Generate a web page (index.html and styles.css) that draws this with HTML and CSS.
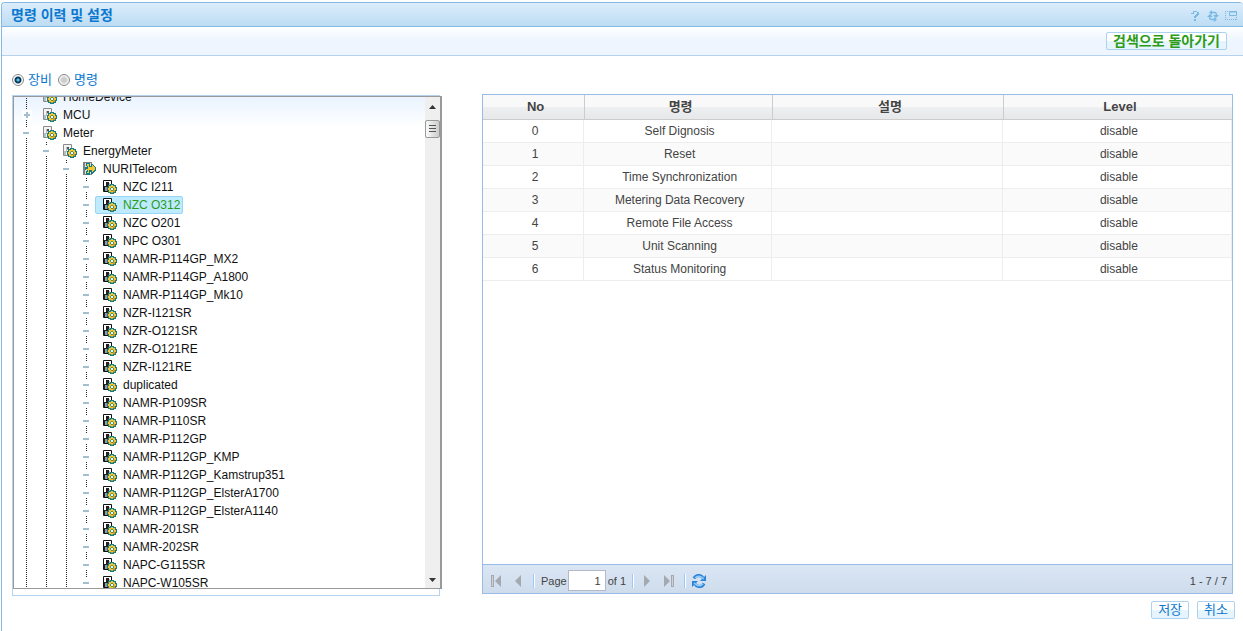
FILE: index.html
```html
<!DOCTYPE html>
<html lang="ko">
<head>
<meta charset="utf-8">
<title>명령 이력 및 설정</title>
<link rel="stylesheet" href="styles.css">
</head>
<body>
<svg class="sprites" aria-hidden="true">
  <symbol id="gear" viewBox="0 0 10 10">
    <path d="M3 0h4v1h2v2h1v4h-1v2h-2v1h-4v-1h-2v-2h-1v-4h1v-2h2z" fill="#137e86"/>
    <path d="M4 1h2v1h2v2h1v2h-1v2h-2v1h-2v-1h-2v-2h-1v-2h1v-2h2z" fill="#f8c62c"/>
    <path d="M6 6h2v2h-2v1h-2v-1h2z" fill="#dc9710"/>
    <path d="M4 3h2v1h1v2h-1v1h-2v-1h-1v-2h1z" fill="#5a8e5c"/><path d="M4 4h2v2h-2z" fill="#e8fbff"/>
  </symbol>
  <symbol id="device" viewBox="0 0 14 14">
    <path d="M.5.5h8v11h-8z" fill="#fff" stroke="#111"/>
    <path d="M3 2h3v4h-1v1h-1v4h-3v-5h2z" fill="#222"/><path d="M2 7h2v4h-2z" fill="#999"/><path d="M6 3h1v3h-1z" fill="#bbb"/>
    <use href="#gear" x="4" y="4" width="10" height="10"/>
  </symbol>
  <symbol id="group" viewBox="0 0 14 14">
    <path d="M.5.5h8v11h-8z" fill="#f4f4f4" stroke="#8c8c8c"/>
    <path d="M3 3h2v3h-1v2h-1v3h-2v-4h2z" fill="#bbb"/><path d="M4 3h2v2h-2z" fill="#555"/>
    <use href="#gear" x="4" y="4" width="10" height="10"/>
  </symbol>
  <symbol id="vendor" viewBox="0 0 14 14">
    <path d="M0 0h9v13h-9z" fill="#808080"/><path d="M2 1h6v11h-6z" fill="#ddd"/>
    <path d="M3 1h4v3h1v-2h2v1h1v1h1v1h1v4h-1v1h-1v1h-1v1h-2v-2h-1v3h-4v-4h1v-1h-2v-3h2v-1h-1z" fill="#137e86"/>
    <path d="M4 2h2v3h3v-2h1v1h1v1h1v3h-1v1h-1v1h-1v-2h-3v3h-2v-1h1v-2h-2v-1h2v-3h-1z" fill="#f8c62c"/>
  </symbol>
</svg>
<main class="panel">
  <header class="panel-title">
    <h1>명령 이력 및 설정</h1>
    <div class="tools">
      <button class="tool" aria-label="도움말"><svg viewBox="0 0 12 12"><path d="M2 3h2v-2h4v1h2v3h-1v1h-1v1h-1v1h-2v-2h1v-1h1v-1h1v-2h-3v2h-3zM5 9h2v2h-2z" fill="#78b9e5"/></svg></button>
      <button class="tool" aria-label="새로 고침"><svg viewBox="0 0 12 12"><path d="M3.500 2.500H8Q9.500 3 9.500 5M8.500 9.500H4Q2.500 9 2.500 7" fill="none" stroke="#78b9e5" stroke-width="1.500"/><path d="M6 5h6L9 8zM0 7h6L3 4zM5 0v5L2 2.500zM7 7v5l3-2.500z" fill="#78b9e5"/></svg></button>
      <button class="tool" aria-label="최대화"><svg viewBox="0 0 12 12"><path d="M4.500 1.500h7v4h-7zM4 2h8" fill="none" stroke="#78b9e5"/><path d="M.5 1v10M0 1.500h4M0 9.500h12M11.500 7v3" fill="none" stroke="#78b9e5" stroke-dasharray="1 1"/></svg></button>
    </div>
  </header>
  <div class="search-bar"><button class="btn btn-back">검색으로 돌아가기</button></div>
  <div class="modes">
    <label><input type="radio" name="mode" checked>장비</label>
    <label><input type="radio" name="mode">명령</label>
  </div>
  <div class="columns">
    <section class="tree-frame">
      <div class="tree-box">
        <ul class="tree">
          <li><div class="node"><i></i><div class="label"><svg><use href="#group"/></svg>HomeDevice</div></div></li>
          <li><div class="node"><i class="plus"></i><div class="label"><svg><use href="#group"/></svg>MCU</div></div></li>
          <li><div class="node"><i class="minus"></i><div class="label"><svg><use href="#group"/></svg>Meter</div></div>
            <ul><li><div class="node"><i class="minus"></i><div class="label"><svg><use href="#group"/></svg>EnergyMeter</div></div>
              <ul><li><div class="node"><i class="minus"></i><div class="label"><svg><use href="#vendor"/></svg>NURITelecom</div></div>
                <ul id="models"></ul>
              </li></ul>
            </li></ul>
          </li>
        </ul>
        <div class="scroll" aria-hidden="true">
          <svg viewBox="0 0 7 4"><path d="M0 4h7L3.500 0z" fill="#333"/></svg>
          <div class="thumb"></div>
          <svg viewBox="0 0 7 4"><path d="M0 0h7L3.500 4z" fill="#333"/></svg>
        </div>
      </div>
    </section>
    <section class="right">
      <div class="grid">
        <table>
          <colgroup><col class="c-no"><col class="c-cmd"><col class="c-desc"><col class="c-level"></colgroup>
          <thead><tr><th>No</th><th>명령</th><th>설명</th><th>Level</th></tr></thead>
          <tbody>
            <tr><td>0</td><td>Self Dignosis</td><td></td><td>disable</td></tr>
            <tr><td>1</td><td>Reset</td><td></td><td>disable</td></tr>
            <tr><td>2</td><td>Time Synchronization</td><td></td><td>disable</td></tr>
            <tr><td>3</td><td>Metering Data Recovery</td><td></td><td>disable</td></tr>
            <tr><td>4</td><td>Remote File Access</td><td></td><td>disable</td></tr>
            <tr><td>5</td><td>Unit Scanning</td><td></td><td>disable</td></tr>
            <tr><td>6</td><td>Status Monitoring</td><td></td><td>disable</td></tr>
          </tbody>
        </table>
        <footer class="pager">
          <button class="page-btn" aria-label="처음"><svg viewBox="0 0 12 12"><path d="M1 0h3v12h-3zM11 0v12L5 6z" fill="#a4a9b0"/><path d="M2 1h1v10h-1z" fill="#d0d0d0"/></svg></button>
          <button class="page-btn" aria-label="이전"><svg viewBox="0 0 12 12"><path d="M9 0v12L3 6z" fill="#a4a9b0"/></svg></button>
          <span class="sep"></span>
          <label for="page">Page</label><input id="page" class="page-no" type="text" value="1"><span class="total">of 1</span>
          <span class="sep"></span>
          <button class="page-btn" aria-label="다음"><svg viewBox="0 0 12 12"><path d="M3 0v12L9 6z" fill="#a4a9b0"/></svg></button>
          <button class="page-btn" aria-label="마지막"><svg viewBox="0 0 12 12"><path d="M8 0h3v12h-3zM1 0v12L7 6z" fill="#a4a9b0"/><path d="M9 1h1v10h-1z" fill="#d0d0d0"/></svg></button>
          <span class="sep"></span>
          <button class="page-btn reload" aria-label="새로 고침"><svg viewBox="0 0 14 14"><path d="M2 4.500C4 .5 9 .5 11 4M12 9.500C10 13.500 5 13.500 3 10" fill="none" stroke="#2b83d8" stroke-width="3"/><path d="M14 1v6H8zM0 13V7h6z" fill="#2b83d8"/><path d="M3 4Q6 1 10 3.500L12 5M11 10Q8 13 4 10.500L2 9" fill="none" stroke="#91ccfa" stroke-width="1.500"/></svg></button>
          <span class="count">1 - 7 / 7</span>
        </footer>
      </div>
      <div class="actions"><button class="btn">저장</button><button class="btn">취소</button></div>
    </section>
  </div>
</main>
<script src="tree.js"></script>
</body>
</html>
```

FILE: tree.js
```js
const models = ['NZC I211', 'NZC O312', 'NZC O201', 'NPC O301', 'NAMR-P114GP_MX2',
  'NAMR-P114GP_A1800', 'NAMR-P114GP_Mk10', 'NZR-I121SR', 'NZR-O121SR', 'NZR-O121RE',
  'NZR-I121RE', 'duplicated', 'NAMR-P109SR', 'NAMR-P110SR', 'NAMR-P112GP',
  'NAMR-P112GP_KMP', 'NAMR-P112GP_Kamstrup351', 'NAMR-P112GP_ElsterA1700',
  'NAMR-P112GP_ElsterA1140', 'NAMR-201SR', 'NAMR-202SR', 'NAPC-G115SR', 'NAPC-W105SR'];
document.getElementById('models').innerHTML = models.map((name) =>
  `<li><div class="node"><i class="minus"></i><div class="label${name === 'NZC O312' ? ' selected' : ''}"><svg><use href="#device"/></svg>${name}</div></div></li>`).join('');
```

FILE: styles.css
```css
* { box-sizing: border-box; }
body { margin: 0; color: #444; background: #fff; font: 12px/18px "Liberation Sans", "Noto Sans CJK KR", sans-serif; }
button, input { font: inherit; margin: 0; }
.sprites { position: absolute; width: 0; height: 0; }
.panel { margin: 2px 0 0 1px; min-height: calc(100vh - 2px); border: 1px solid #83b9e2; border-right: 0; border-bottom: 0; border-radius: 4px 4px 0 0; }
.panel-title { display: flex; justify-content: space-between; align-items: center; height: 24px; padding: 0 6px 0 9px; border-bottom: 1px solid #83b9e2; border-radius: 4px 4px 0 0; background: linear-gradient(#dcedfc, #bddcf3); }
h1 { margin: 0; font-size: 14px; line-height: 20px; color: #0a78cf; }
.tools { display: flex; gap: 6px; padding-top: 2px; }
.tool { width: 12px; height: 12px; padding: 0; border: 0; background: none; }
.tool svg { display: block; width: 12px; height: 12px; }
.search-bar { display: flex; justify-content: flex-end; align-items: center; height: 29px; padding-right: 16px; border-bottom: 1px solid #b5d3ed; background: linear-gradient(#fff, #edf5fe 50%, #eef5fe); }
.btn { height: 18px; padding: 0 6px; border: 1px solid #acd2ee; border-radius: 2px; background: linear-gradient(#fff 50%, #e5f4fd 50%); color: #0a78cf; font-size: 13px; line-height: 16px; }
.btn-back { font-size: 14px; font-weight: bold; color: #2b9c18; }
.modes { display: flex; gap: 6px; padding: 15px 10px 0; color: #0a78cf; font-size: 13px; }
.modes label { display: flex; align-items: center; gap: 4px; height: 18px; }
.modes input { appearance: none; width: 12px; height: 12px; border: 1px solid #888; border-radius: 50%; background: radial-gradient(circle, #ccc 30%, #fff 75%); }
.modes input:checked { background: radial-gradient(circle, #5cc5ee 0 1px, #0d3b60 2px 3px, #fff 4px); }
.columns { display: grid; grid-template-columns: 430fr 751fr; gap: 40px; padding: 5px 10px 0; }
.tree-frame { height: 501px; margin: 1px 2px 0 0; border: 1px solid #b5d3ed; }
.tree-box { display: flex; height: 493px; margin-right: -3px; border: 1px solid #999; border-right-width: 2px; overflow: hidden; background: linear-gradient(#e9f3ff, #fff 30px); }
.tree, .tree ul { margin: 0; padding: 0; list-style: none; }
.tree { flex: 1; margin-top: -9px; }
.tree li { background: repeating-linear-gradient(#222 0 1px, transparent 1px 2px) 12px 0 / 1px 100% no-repeat; }
.tree ul { margin-left: 20px; }
.node { display: flex; align-items: center; height: 18px; color: #111; }
.node i { width: 10px; height: 10px; margin: 0 3px 0 8px; }
.label { display: flex; align-items: center; height: 18px; padding: 0 2px 0 7px; border: 1px solid transparent; border-radius: 2px; }
.node svg { width: 14px; height: 14px; margin-right: 6px; }
.plus, .minus { background: linear-gradient(#a0bfd0, #a0bfd0) 1px 4px / 6px 2px no-repeat, #fff; }
.plus { background: linear-gradient(#a0bfd0, #a0bfd0) 2px 4px / 6px 2px no-repeat, linear-gradient(#a0bfd0, #a0bfd0) 4px 2px / 2px 6px no-repeat, #fff; }
.selected { border-color: #99d5f5; background: #beebff; color: #2b9c18; }
.scroll { display: flex; flex-direction: column; align-items: center; width: 15px; padding: 8px 0 6px; background: #efefef; }
.scroll > svg { width: 7px; height: 4px; }
.thumb { width: 15px; height: 18px; margin: 11px 0 auto; border: 1px solid #999; border-radius: 2px; background: repeating-linear-gradient(#555 0 1px, transparent 1px 3px) 3px 4px / 7px 8px no-repeat, linear-gradient(90deg, #fafafa, #ccc); }
.grid { display: flex; flex-direction: column; height: 500px; border: 1px solid #99bbe8; }
table { width: 100%; table-layout: fixed; border-collapse: separate; border-spacing: 0; text-align: center; }
.c-no { width: 13.5%; } .c-cmd { width: 25.1%; } .c-desc { width: 30.8%; }
th, td { padding: 0 0 0 4px; overflow: hidden; }
th { height: 25px; border-left: 1px solid #ccc; border-bottom: 1px solid #ccc; background: linear-gradient(#f9f9f9 50%, #eeeff0 50%, #e7e8ea); font-size: 13px; }
th:first-child { border-left: 0; }
td { height: 23px; border-right: 1px solid #ededed; border-bottom: 1px solid #ededed; }
tbody tr:nth-child(even) { background: #fafafa; }
.pager { display: flex; align-items: center; height: 29px; margin-top: auto; padding: 3px 5px 0 6px; border-top: 1px solid #99bbe8; background: linear-gradient(#dbe6f4, #cddcec); font-size: 11px; }
.page-btn { width: 14px; height: 14px; margin-right: 8px; padding: 0; border: 0; background: none; }
.page-btn svg { display: block; width: 12px; height: 12px; margin: 1px; }
.page-btn.reload svg { width: 14px; height: 14px; margin: 0; }
.sep { width: 2px; height: 14px; margin: 0 6px 0 0; border-left: 1px solid #98c8ff; background: #fff; }
.total + .sep { margin-left: 6px; }
.page-no { width: 38px; height: 21px; margin: 0 2px 0 1px; padding: 0 4px; border: 1px solid #b5b8c8; text-align: right; color: #444; }
.count { margin-left: auto; }
.actions { display: flex; justify-content: flex-end; gap: 8px; margin-right: -2px; padding-top: 7px; }
```
